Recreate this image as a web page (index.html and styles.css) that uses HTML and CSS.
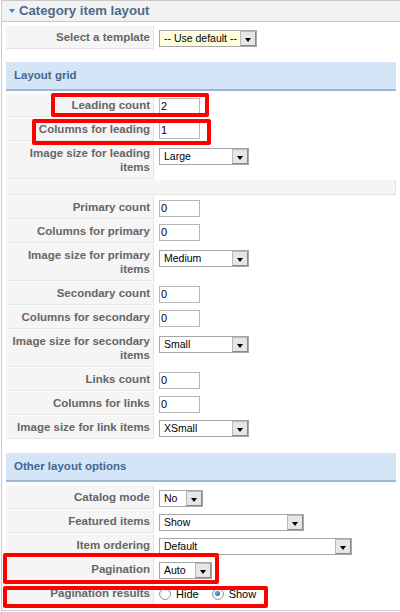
FILE: index.html
```html
<!DOCTYPE html>
<html>
<head>
<meta charset="utf-8">
<title>Category item layout</title>
<link rel="stylesheet" href="styles.css">
</head>
<body>
<div class="pane">
  <h3 class="pane-title"><span class="arrow"></span>Category item layout</h3>
  <div class="pane-body">
    <div class="params">
      <div class="row">
        <div class="key">Select a template</div>
        <div class="val"><span class="sel sel-yellow w-template"><span class="sel-text">-- Use default --</span><span class="sel-btn"></span></span></div>
      </div>
    </div>

    <div class="section">Layout grid</div>
    <div class="params params-grid">
      <div class="row">
        <div class="key">Leading count</div>
        <div class="val"><span class="inp">2</span></div>
      </div>
      <div class="row">
        <div class="key">Columns for leading</div>
        <div class="val"><span class="inp">1</span></div>
      </div>
      <div class="row">
        <div class="key">Image size for leading items</div>
        <div class="val val-tall"><span class="sel w-size"><span class="sel-text">Large</span><span class="sel-btn"></span></span></div>
      </div>
      <div class="spacer"></div>
      <div class="row">
        <div class="key">Primary count</div>
        <div class="val"><span class="inp">0</span></div>
      </div>
      <div class="row">
        <div class="key">Columns for primary</div>
        <div class="val"><span class="inp">0</span></div>
      </div>
      <div class="row">
        <div class="key">Image size for primary items</div>
        <div class="val val-tall"><span class="sel w-size"><span class="sel-text">Medium</span><span class="sel-btn"></span></span></div>
      </div>
      <div class="row">
        <div class="key">Secondary count</div>
        <div class="val"><span class="inp">0</span></div>
      </div>
      <div class="row">
        <div class="key">Columns for secondary</div>
        <div class="val"><span class="inp">0</span></div>
      </div>
      <div class="row">
        <div class="key">Image size for secondary items</div>
        <div class="val val-tall"><span class="sel w-size"><span class="sel-text">Small</span><span class="sel-btn"></span></span></div>
      </div>
      <div class="row">
        <div class="key">Links count</div>
        <div class="val"><span class="inp">0</span></div>
      </div>
      <div class="row">
        <div class="key">Columns for links</div>
        <div class="val"><span class="inp">0</span></div>
      </div>
      <div class="row">
        <div class="key">Image size for link items</div>
        <div class="val"><span class="sel w-size"><span class="sel-text">XSmall</span><span class="sel-btn"></span></span></div>
      </div>
    </div>

    <div class="section section-other">Other layout options</div>
    <div class="params params-other">
      <div class="row">
        <div class="key">Catalog mode</div>
        <div class="val"><span class="sel w-no"><span class="sel-text">No</span><span class="sel-btn"></span></span></div>
      </div>
      <div class="row">
        <div class="key">Featured items</div>
        <div class="val"><span class="sel w-show"><span class="sel-text">Show</span><span class="sel-btn"></span></span></div>
      </div>
      <div class="row">
        <div class="key">Item ordering</div>
        <div class="val"><span class="sel w-default"><span class="sel-text">Default</span><span class="sel-btn"></span></span></div>
      </div>
      <div class="row">
        <div class="key">Pagination</div>
        <div class="val"><span class="sel w-auto"><span class="sel-text">Auto</span><span class="sel-btn"></span></span></div>
      </div>
      <div class="row">
        <div class="key">Pagination results</div>
        <div class="val val-radios">
          <span class="radio"></span><span class="radio-label">Hide</span>
          <span class="radio radio-on"></span><span class="radio-label">Show</span>
        </div>
      </div>
    </div>
  </div>
</div>

<div class="mark mark-leading"></div>
<div class="mark mark-columns"></div>
<div class="mark mark-pagination"></div>
<div class="mark mark-results"></div>
</body>
</html>
```

FILE: styles.css
```css
html, body {
  margin: 0;
  padding: 0;
  background: #ffffff;
}

body {
  position: relative;
  width: 400px;
  height: 612px;
  overflow: hidden;
  font-family: "Liberation Sans", Arial, sans-serif;
  font-size: 11px;
  color: #333333;
}

.pane {
  margin-left: 1px;
  border-left: 1px solid #c9c9c9;
  border-bottom: 1px solid #c9c9c9;
}

.pane-title {
  margin: 0;
  height: 20px;
  line-height: 20px;
  border-top: 1px solid #c9c9c9;
  border-bottom: 1px solid #c9c9c9;
  background: #f2f2f2;
  font-size: 13.2px;
  font-weight: bold;
  color: #50698b;
  white-space: nowrap;
}

.arrow {
  display: inline-block;
  width: 0;
  height: 0;
  margin: 0 4px 0 7px;
  border-left: 3.5px solid transparent;
  border-right: 3.5px solid transparent;
  border-top: 4px solid #2f82d8;
  vertical-align: 2px;
}

.pane-body {
  padding: 4px 4px 5px 4px;
}

.params {
  display: flex;
  flex-direction: column;
  gap: 1px;
}

.params-grid {
  margin-top: 3px;
}

.params-other {
  margin-top: 4px;
}

.row {
  display: flex;
  gap: 1px;
}

.key {
  flex: 0 0 148px;
  box-sizing: border-box;
  padding: 4px 3px;
  background: #f5f5f5;
  border-right: 1px solid #e4e4e4;
  border-bottom: 1px solid #e4e4e4;
  text-align: right;
  font-size: 11.5px;
  font-weight: bold;
  line-height: 14px;
  color: #666666;
}

.val {
  flex: 1;
  padding: 4px 0 0 4px;
}

.val-tall {
  padding-top: 6px;
}

.spacer {
  height: 15px;
  box-sizing: border-box;
  background: #f5f5f5;
  border-right: 1px solid #e4e4e4;
  border-bottom: 1px solid #e4e4e4;
}

.section {
  margin-top: 13px;
  height: 27px;
  line-height: 27px;
  padding-left: 8px;
  background: #d4e5f8;
  border-bottom: 2px solid #9db6d2;
  font-size: 11.5px;
  font-weight: bold;
  color: #46668f;
}

.section-other {
  margin-top: 14px;
}

.inp {
  display: block;
  box-sizing: border-box;
  width: 41px;
  height: 17px;
  padding-left: 1px;
  border: 1px solid #b7b7b7;
  background: #ffffff;
  font-size: 11px;
  line-height: 15px;
  color: #000000;
}

.sel {
  display: flex;
  box-sizing: border-box;
  height: 17px;
  border: 1px solid #a7a7a7;
  background: #ffffff;
}

.sel-yellow {
  background: #ffffdd;
}

.sel-text {
  flex: 1;
  padding-left: 4px;
  font-size: 10.5px;
  line-height: 15px;
  color: #000000;
  white-space: nowrap;
  overflow: hidden;
}

.sel-btn {
  flex: 0 0 16px;
  box-sizing: border-box;
  height: 15px;
  display: flex;
  align-items: center;
  justify-content: center;
  background: #e6e6e6;
  border: 1px solid #8a8a8a;
  border-top-color: #b8b8b8;
  border-left-color: #b8b8b8;
}

.sel-btn::after {
  content: "";
  width: 0;
  height: 0;
  margin-top: 3px;
  border-left: 3.5px solid transparent;
  border-right: 3.5px solid transparent;
  border-top: 4px solid #000000;
}

.w-template { width: 98px; }
.w-size { width: 90px; }
.w-no { width: 44px; }
.w-show { width: 145px; }
.w-default { width: 193px; }
.w-auto { width: 53px; }

.val-radios {
  display: flex;
  align-items: center;
  padding-top: 0;
}

.radio {
  flex: 0 0 12px;
  box-sizing: border-box;
  width: 12px;
  height: 12px;
  border-radius: 50%;
  border: 1px solid #9a9a9a;
  background: radial-gradient(circle at 60% 65%, #ffffff 30%, #dcdcdc 100%);
  display: flex;
  align-items: center;
  justify-content: center;
}

.radio-on::after {
  content: "";
  width: 5px;
  height: 5px;
  border-radius: 50%;
  background: radial-gradient(circle at 40% 35%, #6fb8e8 0%, #1f5f9e 80%);
}

.radio-label {
  margin-left: 5px;
  margin-right: 13px;
  font-size: 11px;
  color: #000000;
}

.mark {
  position: absolute;
  box-sizing: border-box;
  border: 4px solid #ff0000;
  border-radius: 2px;
}

.mark-leading {
  left: 51px;
  top: 93px;
  width: 158px;
  height: 24px;
}

.mark-columns {
  left: 32px;
  top: 119px;
  width: 179px;
  height: 26px;
}

.mark-pagination {
  left: 3px;
  top: 553px;
  width: 216px;
  height: 31px;
}

.mark-results {
  left: 3px;
  top: 586px;
  width: 265px;
  height: 22px;
}
```
